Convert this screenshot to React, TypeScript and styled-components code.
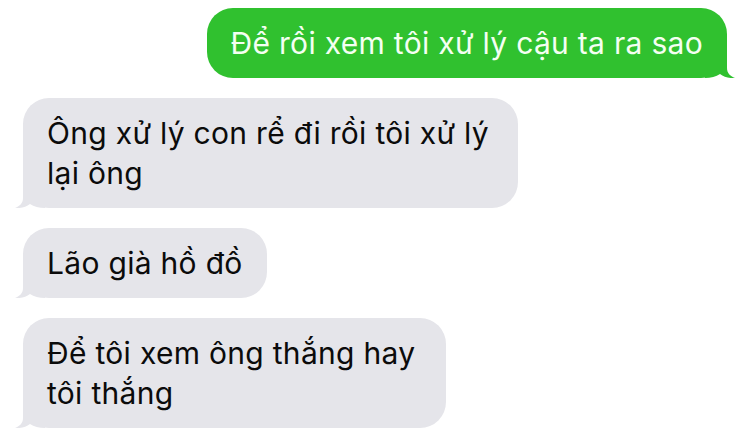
import styled, { createGlobalStyle } from 'styled-components';

const GlobalStyle = createGlobalStyle`
  html, body {
    margin: 0;
    padding: 0;
    background: #ffffff;
  }
  body {
    font-family: Inter, "Noto Sans", "Liberation Sans", sans-serif;
  }
`;

const Thread = styled.div`
  width: 750px;
  height: 445px;
  box-sizing: border-box;
  padding: 8px 23px 0 23px;
  display: flex;
  flex-direction: column;
  gap: 20px;
  overflow: hidden;
`;

const Bubble = styled.div<{ $mine?: boolean; $w?: number }>`
  position: relative;
  align-self: ${(p) => (p.$mine ? 'flex-end' : 'flex-start')};
  box-sizing: border-box;
  width: ${(p) => (p.$w ? `${p.$w}px` : 'auto')};
  padding: 15px 24px 15px 24px;
  border-radius: 26px;
  background: ${(p) => (p.$mine ? '#30c12f' : '#e5e5ea')};
  color: ${(p) => (p.$mine ? '#f4fff2' : '#0b0b0b')};
  font-size: 30px;
  line-height: 40px;
  letter-spacing: 0.3px;
  white-space: nowrap;
`;

const Tail = styled.svg<{ $mine?: boolean }>`
  position: absolute;
  bottom: 0;
  width: 30px;
  height: 26px;
  ${(p) => (p.$mine ? 'right: -8px; transform: scaleX(-1);' : 'left: -8px;')}
  fill: ${(p) => (p.$mine ? '#30c12f' : '#e5e5ea')};
`;

const BubbleTail = ({ mine }: { mine?: boolean }) => (
  <Tail $mine={mine} viewBox="0 0 30 26">
    <path d="M8 0 L8 16 C8 21 5 24 0 26 C6 26.5 11 25 15 22 C19 24.5 24 26 30 26 L30 0 Z" />
  </Tail>
);

const messages = [
  { mine: true, lines: ['Để rồi xem tôi xử lý cậu ta ra sao'] },
  { mine: false, w: 495, lines: ['Ông xử lý con rể đi rồi tôi xử lý', 'lại ông'] },
  { mine: false, lines: ['Lão già hồ đồ'] },
  { mine: false, w: 423, lines: ['Để tôi xem ông thắng hay', 'tôi thắng'] },
];

export default function App() {
  return (
    <>
      <GlobalStyle />
      <Thread>
        {messages.map((m, i) => (
          <Bubble key={i} $mine={m.mine} $w={m.w}>
            {m.lines.map((l, j) => (
              <div key={j}>{l}</div>
            ))}
            <BubbleTail mine={m.mine} />
          </Bubble>
        ))}
      </Thread>
    </>
  );
}
